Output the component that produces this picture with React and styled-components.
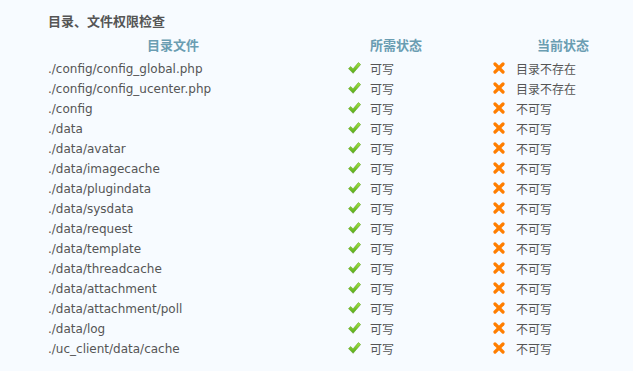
import React from "react";
import styled, { createGlobalStyle } from "styled-components";

const GlobalStyle = createGlobalStyle`
  html, body {
    margin: 0;
    padding: 0;
    background: #f7fbff;
  }
  body {
    font-family: "DejaVu Sans", Verdana, "Noto Sans CJK SC", sans-serif;
    font-size: 12px;
    color: #555;
  }
`;

const Page = styled.div`
  width: 633px;
  height: 371px;
  padding: 13px 0 0 48px;
  box-sizing: border-box;
  overflow: hidden;
`;

const Title = styled.h3`
  margin: 0 0 6px;
  font-size: 13px;
  line-height: 16px;
  font-weight: bold;
  color: #555;
  font-family: "Noto Sans CJK SC", sans-serif;
`;

const Row = styled.div`
  display: grid;
  grid-template-columns: 300px 145px 1fr;
  height: 20px;
  align-items: center;
`;

const HeadRow = styled(Row)`
  margin-bottom: 3px;
`;

const HeadCell = styled.div`
  padding-left: ${(p) => p.$indent}px;
  font-family: "Noto Sans CJK SC", sans-serif;
  font-size: 13px;
  font-weight: bold;
  color: #6a9db2;
  line-height: 20px;
`;

const PathCell = styled.div`
  line-height: 20px;
  padding-top: 1px;
  white-space: nowrap;
`;

const StatusCell = styled.div`
  display: flex;
  align-items: center;
  height: 20px;
  font-family: "Noto Sans CJK SC", sans-serif;
  font-size: 12px;
  line-height: 18px;
`;

const IconBox = styled.span`
  display: inline-flex;
  width: ${(p) => p.$width}px;
  flex: none;
  align-items: center;
  margin-top: -1px;
`;

const CheckIcon = () => (
  <svg width="13" height="12" viewBox="0 0 13 12">
    <defs>
      <linearGradient id="okg" x1="0" y1="0" x2="0" y2="1">
        <stop offset="0" stopColor="#a6e640" />
        <stop offset="1" stopColor="#52a817" />
      </linearGradient>
    </defs>
    <polygon
      points="0.5,6.6 2.8,4.6 5,6.9 10.4,0.6 12.6,2.5 5.1,11.3"
      fill="url(#okg)"
      stroke="#5c9e22"
      strokeWidth="0.6"
      strokeLinejoin="round"
    />
  </svg>
);

const CrossIcon = () => (
  <svg width="12" height="12" viewBox="0 0 12 12">
    <g stroke="#ff7e00" strokeWidth="3.2" strokeLinecap="round">
      <line x1="2" y1="2" x2="10" y2="10" />
      <line x1="10" y1="2" x2="2" y2="10" />
    </g>
  </svg>
);

const rows = [
  ["./config/config_global.php", "目录不存在"],
  ["./config/config_ucenter.php", "目录不存在"],
  ["./config", "不可写"],
  ["./data", "不可写"],
  ["./data/avatar", "不可写"],
  ["./data/imagecache", "不可写"],
  ["./data/plugindata", "不可写"],
  ["./data/sysdata", "不可写"],
  ["./data/request", "不可写"],
  ["./data/template", "不可写"],
  ["./data/threadcache", "不可写"],
  ["./data/attachment", "不可写"],
  ["./data/attachment/poll", "不可写"],
  ["./data/log", "不可写"],
  ["./uc_client/data/cache", "不可写"],
];

export default function App() {
  return (
    <Page>
      <GlobalStyle />
      <Title>目录、文件权限检查</Title>
      <HeadRow>
        <HeadCell $indent={99}>目录文件</HeadCell>
        <HeadCell $indent={22}>所需状态</HeadCell>
        <HeadCell $indent={44}>当前状态</HeadCell>
      </HeadRow>
      {rows.map(([path, state]) => (
        <Row key={path}>
          <PathCell>{path}</PathCell>
          <StatusCell>
            <IconBox $width={22}>
              <CheckIcon />
            </IconBox>
            可写
          </StatusCell>
          <StatusCell>
            <IconBox $width={23}>
              <CrossIcon />
            </IconBox>
            {state}
          </StatusCell>
        </Row>
      ))}
    </Page>
  );
}
